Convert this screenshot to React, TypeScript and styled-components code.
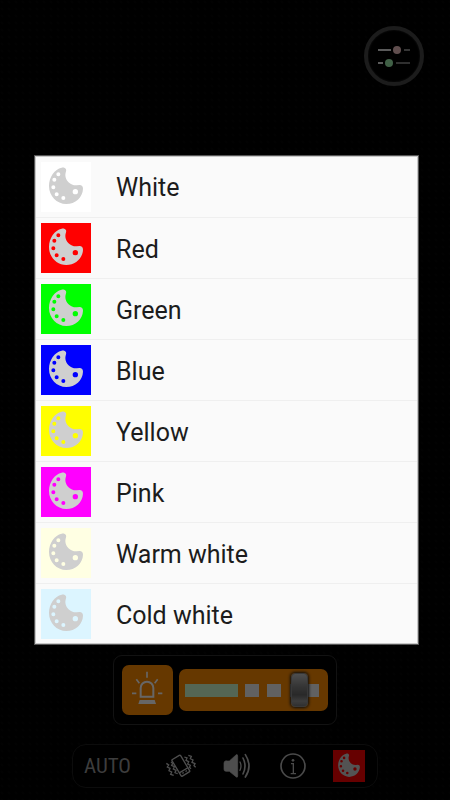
import React, { useState } from "react";
import styled, { createGlobalStyle } from "styled-components";

const GlobalStyle = createGlobalStyle`
  *, *::before, *::after { box-sizing: border-box; }
  body {
    margin: 0;
    background: #000;
    font-family: Roboto, "Liberation Sans", sans-serif;
  }
`;

const Screen = styled.main`
  min-height: 100vh;
  display: flex;
  flex-direction: column;
  justify-content: space-between;
  background: radial-gradient(circle at 2px 2px, #060606 1px, #000 2px) 0 0 / 7px 7px;
`;

const Header = styled.header`
  display: flex;
  justify-content: flex-end;
  padding: 26px 26px 0;
`;

const SettingsButton = styled.button`
  width: 60px;
  height: 60px;
  padding: 0;
  border: 4px solid #464646;
  border-radius: 50%;
  background: #000;
  box-shadow: inset 0 0 2px #333;
  svg { display: block; }
`;

const Controls = styled.footer`
  display: flex;
  flex-direction: column;
  align-items: center;
  gap: 19px;
  padding-bottom: 12px;
`;

const StrobePanel = styled.section`
  display: flex;
  align-items: center;
  gap: 6px;
  padding: 9px 8px;
  border: 1px solid #2e2e2e;
  border-radius: 9px;
  background: #000;
`;

const SirenButton = styled.button`
  width: 51px;
  height: 50px;
  padding: 0;
  border: 0;
  border-radius: 7px;
  background: #ff8c00;
  svg { display: block; }
`;

const SliderBox = styled.label`
  display: flex;
  align-items: center;
  width: 149px;
  height: 42px;
  padding: 0 9px 0 6px;
  border-radius: 7px;
  background: #ff8c00;
`;

const Slider = styled.input`
  appearance: none;
  width: 100%;
  height: 36px;
  margin: 0;
  background:
    linear-gradient(90deg,
      #d2ffd2 0 53px, transparent 53px 60px,
      #f2f2f2 60px 74px, transparent 74px 82px,
      #f2f2f2 82px 96px, transparent 96px 105px,
      #f2f2f2 105px)
    center / 100% 13px no-repeat;

  &::-webkit-slider-thumb {
    appearance: none;
    width: 17px;
    height: 34px;
    border: 1px solid #8c8c8c;
    border-radius: 4px;
    background: linear-gradient(#c4c4c4 0, #8a8a8a 35%, #666 65%, #999 85%, #777 100%);
    box-shadow: 0 0 3px 1px #222;
  }
`;

const Toolbar = styled.nav`
  display: grid;
  grid-template-columns: 80px repeat(4, 56px);
  align-items: center;
  justify-items: center;
  height: 44px;
  border: 1px solid #1e1e1e;
  border-radius: 14px;
  background: #000;
`;

const ToolButton = styled.button<{ $fill?: string }>`
  display: flex;
  align-items: center;
  justify-content: center;
  width: 32px;
  height: 32px;
  padding: 0;
  border: 0;
  background: ${(p) => p.$fill ?? "transparent"};
`;

const AutoButton = styled.button`
  justify-self: start;
  padding: 0 0 0 11px;
  border: 0;
  background: transparent;
  color: #999;
  font: 400 21px "Roboto Condensed", Roboto, sans-serif;
`;

const Scrim = styled.div`
  position: fixed;
  inset: 0;
  display: flex;
  align-items: center;
  padding: 0 31px 0 34px;
  background: rgba(0, 0, 0, 0.6);
`;

const Dialog = styled.div`
  flex: 1;
  border: 1px solid #555;
  background: #fafafa;
  box-shadow: inset 0 0 0 1px #c8c8c8;
`;

const ColorList = styled.ul`
  list-style: none;
  margin: 0;
  padding: 0 1px;
`;

const ColorItem = styled.li`
  & + & { border-top: 1px solid #efefef; }
  &:first-child button { height: 61px; }
`;

const ColorRow = styled.button`
  display: flex;
  align-items: center;
  gap: 25px;
  width: 100%;
  height: 60px;
  padding: 0 5px;
  border: 0;
  background: transparent;
  color: #1c1c1c;
  font: 25px/32px Roboto, sans-serif;
  text-align: left;
`;

const ColorName = styled.span`
  padding-top: 3px;
`;

const Swatch = styled.span<{ $color: string }>`
  width: 50px;
  height: 50px;
  background: ${(p) => p.$color};
  svg { display: block; }
`;

function PaletteIcon({ size, color }: { size: number; color: string }) {
  return (
    <svg width={size} height={size} viewBox="0 0 150 150" aria-hidden="true">
      <path
        fill={color}
        fillRule="evenodd"
        d="M62 17C68 16 73 18 75 22C77 27 73 31 73 39C73 56 89 71 107 70L116 69C122 69 126 73 126 80C125 106 103 126 76 126C47 126 24 102 24 72C24 45 41 21 62 17Z
        M46 37a6 6 0 1 0 12 0a6 6 0 1 0-12 0Z
        M34 53a6 6 0 1 0 12 0a6 6 0 1 0-12 0Z
        M31 76a6 6 0 1 0 12 0a6 6 0 1 0-12 0Z
        M41 97a6 6 0 1 0 12 0a6 6 0 1 0-12 0Z
        M61 108a6 6 0 1 0 12 0a6 6 0 1 0-12 0Z
        M95 89a8 8 0 1 0 16 0a8 8 0 1 0-16 0Z"
      />
    </svg>
  );
}

function SlidersIcon() {
  return (
    <svg width="52" height="52" viewBox="0 0 52 52" fill="none" strokeWidth="2" aria-hidden="true">
      <path d="M10 20h13" stroke="#e0e0e0" />
      <path d="M36 20h6" stroke="#888" />
      <path d="M10 33h5" stroke="#e0e0e0" />
      <path d="M28 33h14" stroke="#777" />
      <circle cx="29" cy="20" r="4" fill="#efc4c4" />
      <circle cx="21" cy="33" r="4" fill="#a0f0b0" />
    </svg>
  );
}

function SirenIcon() {
  return (
    <svg width="51" height="50" viewBox="0 0 153 150" fill="none" stroke="#fff" aria-hidden="true">
      <path strokeWidth="6" d="M56 95V69a19 19 0 0 1 38 0V95Z" />
      <path fill="#fff" stroke="none" d="M53 105H98L102 117H49Z" />
      <path strokeWidth="5" d="M75 20V38M43 43L52 55M107 43L98 55M30 85H43M108 85H121" />
    </svg>
  );
}

function VibrateIcon() {
  return (
    <svg width="32" height="32" viewBox="0 0 96 96" fill="none" stroke="#c4c4c4" strokeWidth="4" aria-hidden="true">
      <g transform="rotate(-31 48 48)">
        <rect x="33" y="18" width="30" height="58" rx="3" />
        <path d="M33 63H63M40 69H45M51 69H56" />
      </g>
      <path d="M18 36L23 40L20 46L28 50L25 57L33 61L30 68L38 71" strokeWidth="4" />
      <path d="M4 40L11 45L7 51L15 55L12 62L20 66L17 73L26 76" strokeWidth="4" />
      <path d="M58 21L66 24L63 31L71 35L68 42L76 46L73 52L78 56" strokeWidth="4" />
      <path d="M70 16L79 19L76 26L84 30L81 37L90 41L87 47L92 52" strokeWidth="4" />
    </svg>
  );
}

function SpeakerIcon() {
  return (
    <svg width="32" height="32" viewBox="0 0 96 96" fill="none" stroke="#c0c0c0" strokeLinecap="round" aria-hidden="true">
      <path fill="#c0c0c0" strokeWidth="2" strokeLinejoin="round" d="M15 33H25L46 14Q50 13 50 18V78Q50 83 46 81L25 64H15Q9 64 9 58V39Q9 33 15 33Z" />
      <path strokeWidth="4" d="M57 36Q63 48 57 61" />
      <path strokeWidth="5" d="M66 24Q78 48 66 72" />
      <path strokeWidth="5" d="M73 14Q95 48 73 81" />
    </svg>
  );
}

function InfoIcon() {
  return (
    <svg width="32" height="32" viewBox="0 0 96 96" fill="none" stroke="#b8b8b8" aria-hidden="true">
      <circle cx="48" cy="48" r="36" strokeWidth="5" />
      <circle cx="48" cy="31" r="4" fill="#b8b8b8" stroke="none" />
      <path strokeWidth="4" d="M42 41H49V70M41 71H57" />
    </svg>
  );
}

const COLORS = [
  { name: "White", value: "#ffffff" },
  { name: "Red", value: "#ff0000" },
  { name: "Green", value: "#00ff00" },
  { name: "Blue", value: "#0000ff" },
  { name: "Yellow", value: "#ffff00" },
  { name: "Pink", value: "#ff00ff" },
  { name: "Warm white", value: "#ffffe3" },
  { name: "Cold white", value: "#dcf5ff" },
];

export default function App() {
  const [selected, setSelected] = useState("#ff0000");
  const [speed, setSpeed] = useState(91);

  return (
    <>
      <GlobalStyle />
      <Screen>
        <Header>
          <SettingsButton aria-label="Settings">
            <SlidersIcon />
          </SettingsButton>
        </Header>
        <Controls>
          <StrobePanel>
            <SirenButton aria-label="Strobe">
              <SirenIcon />
            </SirenButton>
            <SliderBox>
              <Slider
                type="range"
                aria-label="Strobe speed"
                value={speed}
                onChange={(e) => setSpeed(Number(e.target.value))}
              />
            </SliderBox>
          </StrobePanel>
          <Toolbar>
            <AutoButton>AUTO</AutoButton>
            <ToolButton aria-label="Vibrate">
              <VibrateIcon />
            </ToolButton>
            <ToolButton aria-label="Sound">
              <SpeakerIcon />
            </ToolButton>
            <ToolButton aria-label="Information">
              <InfoIcon />
            </ToolButton>
            <ToolButton aria-label="Color" $fill={selected}>
              <PaletteIcon size={32} color="#cfcfcf" />
            </ToolButton>
          </Toolbar>
        </Controls>
      </Screen>
      <Scrim>
        <Dialog role="dialog" aria-label="Choose color">
          <ColorList>
            {COLORS.map((c) => (
              <ColorItem key={c.name}>
                <ColorRow onClick={() => setSelected(c.value)}>
                  <Swatch $color={c.value}>
                    <PaletteIcon size={50} color="#cfcfcf" />
                  </Swatch>
                  <ColorName>{c.name}</ColorName>
                </ColorRow>
              </ColorItem>
            ))}
          </ColorList>
        </Dialog>
      </Scrim>
    </>
  );
}
